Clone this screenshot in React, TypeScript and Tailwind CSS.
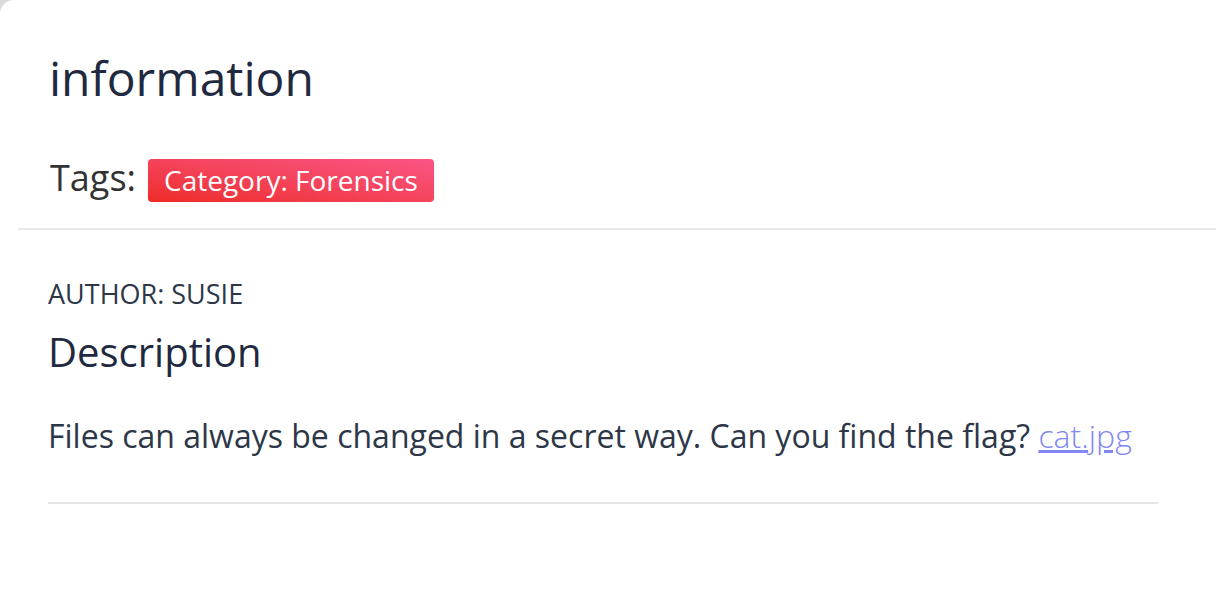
export default function App() {
  return (
    <div className="w-[1216px] h-[606px] bg-[#d9d9d9] overflow-hidden" style={{ fontFamily: '"Open Sans", sans-serif' }}>
      <div className="w-full h-full bg-white rounded-tl-[14px]">
        <div className="ml-[18px] border-b-2 border-[#e8eaee] pl-[31px] pt-[48px] pb-[26px]">
          <h1 className="text-[48px] leading-[60px] text-[#1f2940]">information</h1>
          <div className="flex items-baseline mt-[50px]">
            <span className="text-[36px] leading-[40px] text-[#333] ml-[1px]">Tags:</span>
            <span className="ml-[12px] inline-flex items-center h-[43px] px-[16px] rounded-[4px] bg-gradient-to-tr from-[#ee2a24] to-[#fb5585] text-white text-[28px]">
              Category: Forensics
            </span>
          </div>
        </div>
        <div className="px-[48px] pt-[46px]">
          <div className="text-[27px] leading-[36px] text-[#2d3748] uppercase">Author: Susie</div>
          <h2 className="text-[40px] leading-[52px] text-[#1f2940] mt-[14px]">Description</h2>
          <p className="text-[32px] leading-[44px] text-[#2d3748] mt-[36px]">
            Files can always be changed in a secret way. Can you find the flag?{" "}
            <a href="#" className="text-[#7f88f4] font-light underline">cat.jpg</a>
          </p>
          <div className="mt-[44px] w-[1110px] border-t-2 border-[#e6e6e6]" />
        </div>
      </div>
    </div>
  );
}
